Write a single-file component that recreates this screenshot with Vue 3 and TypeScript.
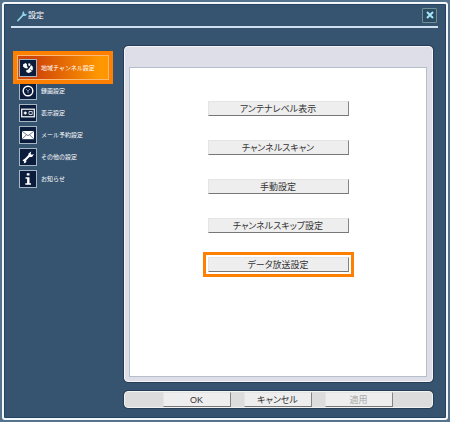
<script setup lang="ts">
import { ref } from 'vue'

type IconName = 'radar' | 'record' | 'display' | 'mail' | 'wrench' | 'info'

interface Category {
  icon: IconName
  label: string
}

const categories: Category[] = [
  { icon: 'radar', label: '地域チャンネル設定' },
  { icon: 'record', label: '録画設定' },
  { icon: 'display', label: '表示設定' },
  { icon: 'mail', label: 'メール予約設定' },
  { icon: 'wrench', label: 'その他の設定' },
  { icon: 'info', label: 'お知らせ' },
]

const actions: string[] = [
  'アンテナレベル表示',
  'チャンネルスキャン',
  '手動設定',
  'チャンネルスキップ設定',
  'データ放送設定',
]

const current = ref(0)
const marked = 4
</script>

<template>
  <div class="desktop">
    <main class="window">
      <header class="titlebar">
        <svg class="title-icon" viewBox="0 0 12 12" aria-hidden="true">
          <path d="M2 10.5 7.5 4.5" stroke="#8fd3e8" stroke-width="1.8" stroke-linecap="round" />
          <path d="M8 .9 6.4 2.5v2.8l.6.6h2.5l1.7-1.8-2 .2-1-1z" fill="#8fd3e8" />
        </svg>
        <h1>設定</h1>
        <button class="close" type="button" aria-label="閉じる">
          <svg viewBox="0 0 8 8" aria-hidden="true">
            <path d="M1 1l6 6M7 1L1 7" stroke="#a6e4f6" stroke-width="2" />
          </svg>
        </button>
      </header>

      <div class="body">
        <nav class="sidebar">
          <button
            v-for="(item, index) in categories"
            :key="item.icon"
            type="button"
            class="category"
            :class="{ active: index === current }"
            @click="current = index"
          >
            <span class="tile">
              <svg viewBox="0 0 16 16" aria-hidden="true">
                <g v-if="item.icon === 'radar'" fill="#fff">
                  <path d="M3.2 4.2 5.8 3 7 4.4 6.8 6 8 7.4 7 8.6 4.8 8 3 6.6z" />
                  <path d="M8.6 3 10.6 4 9.8 6 8.2 5.4z" />
                  <path d="M11 5 12.8 6.8V9.6L11.4 11.8 8.8 13 6.6 12.2 6 10.4 8.2 9.4 9.8 7.4z" />
                  <path d="M10 9.2l2.6 2.4" stroke="#0b1c3c" stroke-width=".7" />
                </g>
                <g v-else-if="item.icon === 'record'" fill="none" stroke="#fff">
                  <circle cx="8" cy="8" r="4.8" stroke-width="1.4" />
                  <path d="M6 6l2 2 2-2M8 8v2.2" stroke="#8291ab" />
                </g>
                <g v-else-if="item.icon === 'display'">
                  <rect x="1.7" y="4.2" width="12.6" height="7.6" fill="#101f3c" stroke="#fff" stroke-width="1.2" />
                  <path d="M3.8 8h3M5.3 6.5v3" stroke="#fff" stroke-width="1.3" />
                  <path d="M9 6.5h3.2v3H9z" fill="none" stroke="#c6cedb" />
                </g>
                <g v-else-if="item.icon === 'mail'">
                  <rect x="2" y="4" width="12" height="8.2" fill="#fff" />
                  <path d="M2 4.2l6 4.5 6-4.5M2.2 12l4-4M13.8 12l-4-4" fill="none" stroke="#4a5a74" stroke-width=".8" />
                </g>
                <g v-else-if="item.icon === 'wrench'">
                  <path d="M4 12 10 6" stroke="#fff" stroke-width="2.2" />
                  <path d="M11.3 2.4 8.5 4.6v2.2l1.2 1.1H12l2-2.6-2.4.4-1-1z" fill="#fff" />
                  <path d="M2.4 11.2 4.6 10l2 2-1.2 2-1.8.2.8-1.4z" fill="#fff" />
                </g>
                <path v-else d="M6.8 2.2h2.7v2.4H6.8zM5.5 6.2h4v6H11v1.5H5.3v-1.5h1.8V7.7H5.5z" fill="#fff" />
              </svg>
            </span>
            <span>{{ item.label }}</span>
          </button>
        </nav>

        <div class="content">
          <section class="panel">
            <div class="sheet">
              <div
                v-for="(label, index) in actions"
                :key="label"
                class="action"
                :class="{ marked: index === marked }"
              >
                <button type="button" class="push">{{ label }}</button>
              </div>
            </div>
          </section>
          <footer class="footer">
            <button type="button" class="push">OK</button>
            <button type="button" class="push">キャンセル</button>
            <button type="button" class="push" disabled>適用</button>
          </footer>
        </div>
      </div>
    </main>
  </div>
</template>

<style>
body {
  margin: 0;
  background: #36536f;
}
</style>

<style scoped>
* {
  box-sizing: border-box;
}

.desktop {
  display: flex;
  min-height: 100vh;
  padding: 2px;
  background: #56738d;
  font-family: "Liberation Sans", "Noto Sans CJK JP", sans-serif;
}

.window {
  display: flex;
  flex: 1;
  flex-direction: column;
  border: 2px solid #f4f7fa;
  border-radius: 3px;
  background: #36536f;
  box-shadow: inset 0 0 0 1px #234462;
}

button {
  margin: 0;
  padding: 0;
  font-family: inherit;
}

.titlebar {
  display: flex;
  align-items: center;
  height: 24px;
  margin: 0 8px 0 7px;
  padding: 2px 1px 0 5px;
  border-bottom: 2px solid #cfe0ee;
}

.title-icon {
  width: 12px;
  height: 12px;
}

h1 {
  margin: 0;
  color: #fff;
  font-size: 8px;
  font-weight: 400;
  line-height: 12px;
}

.close {
  display: flex;
  align-items: center;
  justify-content: center;
  width: 15px;
  height: 15px;
  margin: 0 0 2px auto;
  border: 1px solid #6f9094;
  border-radius: 1px;
  background: #2b4c62;
}

.close svg {
  width: 8px;
  height: 8px;
}

.body {
  display: flex;
  flex: 1;
  padding: 18px 13px 10px 9px;
}

.sidebar {
  display: flex;
  flex: none;
  flex-direction: column;
  width: 100px;
  margin-right: 11px;
  padding-top: 5px;
}

.category {
  display: flex;
  align-items: center;
  gap: 4px;
  height: 22px;
  padding-left: 6px;
  border: 0;
  background: none;
  color: #fff;
  font-size: 6px;
  line-height: 12px;
  text-align: left;
  white-space: nowrap;
}

.category.active {
  position: relative;
  z-index: 1;
  height: 33px;
  margin-bottom: -4px;
  padding-left: 2px;
  border: 4px solid #ff8000;
  background: linear-gradient(90deg, #d04608 20%, #ff9800 90%) padding-box;
  box-shadow: inset 0 0 0 1px #f8b878;
}

.tile {
  display: block;
  width: 18px;
  height: 18px;
  border: 1px solid #a7b6c3;
  background: #0b1c3c;
}

.tile svg {
  display: block;
  width: 16px;
  height: 16px;
}

.content {
  display: flex;
  flex: 1;
  flex-direction: column;
  gap: 9px;
  min-width: 0;
}

.panel {
  display: flex;
  flex: 1;
  padding: 20px 5px 4px 4px;
  border: 1px solid #f6f6fa;
  border-radius: 4px;
  background: #dddee8;
  box-shadow: 0 0 0 1px #263e55;
}

.sheet {
  display: flex;
  flex: 1;
  flex-direction: column;
  align-items: center;
  gap: 24px;
  padding-top: 33px;
  border: 1px solid #b3bfcb;
  background: #fff;
}

.action {
  display: flex;
  width: 141px;
}

.action .push {
  flex: 1;
}

.marked {
  outline: 3px solid #ff8000;
  outline-offset: 2px;
}

.push {
  height: 15px;
  border: 1px solid;
  border-color: #e4e4e4 #858585 #777 #e4e4e4;
  background: #eee;
  color: #333;
  font-size: 9px;
  font-feature-settings: "palt";
  line-height: 12px;
  white-space: nowrap;
}

.push:disabled {
  color: #aaa;
}

.footer {
  display: flex;
  justify-content: center;
  gap: 13px;
  padding-right: 2px;
  border: 1px solid #f2f2f2;
  border-radius: 4px;
  background: #dcdcdc;
  box-shadow: 0 0 0 1px #263e55;
}

.footer .push {
  width: 68px;
}
</style>
